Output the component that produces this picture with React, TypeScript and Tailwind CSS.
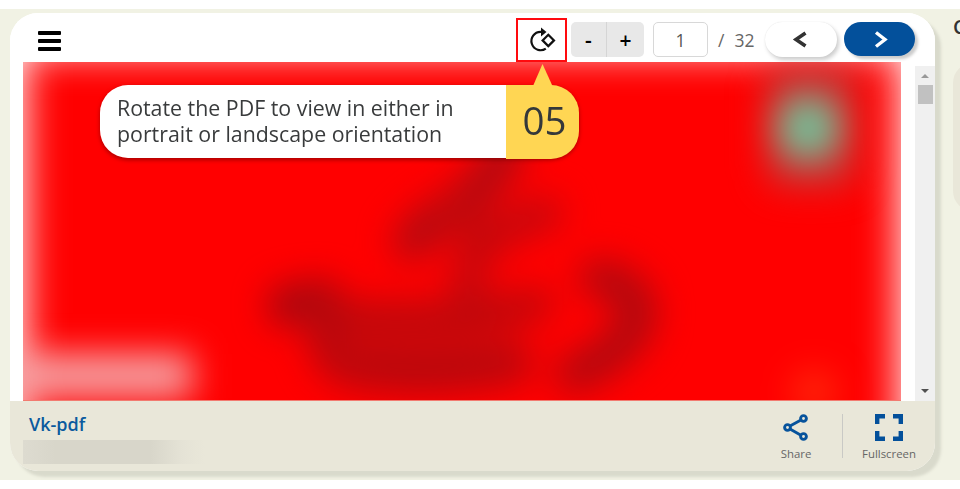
import React from "react";

function BlurredPage() {
  return (
    <svg className="block h-[339px] w-[878px]" viewBox="23 62 878 339" aria-hidden="true">
      <defs>
        <filter id="edge" filterUnits="userSpaceOnUse" x="-80" y="-30" width="1100" height="600" colorInterpolationFilters="sRGB">
          <feGaussianBlur stdDeviation="20" />
        </filter>
        <filter id="soft" filterUnits="userSpaceOnUse" x="-60" y="-20" width="1060" height="560" colorInterpolationFilters="sRGB">
          <feGaussianBlur stdDeviation="17" />
        </filter>
      </defs>
      <rect x="23" y="62" width="878" height="339" fill="#fff" />
      <rect x="24" y="51" width="876" height="460" fill="#f00" filter="url(#edge)" />
      <g filter="url(#soft)" fill="none" strokeLinecap="round" strokeLinejoin="round">
        <path d="M508 142Q498 174 466 200Q426 222 412 242" stroke="#b00b12" strokeWidth="38" />
        <path d="M546 213Q500 226 478 252Q464 270 469 302" stroke="#c4080e" strokeWidth="34" />
        <path d="M450 210L482 238" stroke="#c4080b" strokeWidth="32" />
        <path d="M288 306L322 300" stroke="#980812" strokeWidth="40" />
        <path d="M308 312Q420 326 538 304" stroke="#bd080c" strokeWidth="32" />
        <path d="M326 328Q326 362 350 368Q430 382 516 364" stroke="#b4080e" strokeWidth="36" />
        <path d="M350 344L510 342" stroke="#d40608" strokeWidth="24" />
        <path d="M598 278C654 288 656 338 574 374" stroke="#ae0910" strokeWidth="37" />
        <rect x="0" y="354" width="192" height="44" fill="#f6a2a4" />
        <rect x="765" y="64" width="92" height="124" rx="20" fill="#c03c3c" opacity=".8" />
        <circle cx="808" cy="128" r="33" fill="#78ba94" />
        <circle cx="814" cy="392" r="22" fill="#ff3a10" opacity=".7" />
      </g>
      <path d="M23 400.5H901" stroke="#f27b70" />
    </svg>
  );
}

function Toolbar() {
  return (
    <header className="flex h-[49px] shrink-0 items-start bg-white pl-[28px] pt-[9px] text-[#333]">
      <button className="mt-[9px] flex w-[23px] flex-col gap-[4px]" aria-label="Menu">
        <span className="h-[3.5px] w-[23px] rounded-[1px] bg-black" />
        <span className="mt-[0.5px] h-[3.5px] w-[23px] rounded-[1px] bg-black" />
        <span className="h-[4px] w-[23px] rounded-[1px] bg-black" />
      </button>
      <button className="-mt-[4px] ml-[455px] h-[44px] w-[51px] shrink-0 border-2 border-[#ff0a0e]" aria-label="Rotate">
        <svg width="47" height="40" viewBox="518 20 47 40" fill="none" stroke="#111" strokeWidth="2.2">
          <path d="M545.8 48.6A9.2 9.2 0 1 1 540.5 31.8H543" />
          <path d="M541 27.5L546.5 32L541 36.5Z" fill="#111" stroke="none" />
          <path d="M548.3 34.7L554 40.4L548.3 46.1L542.6 40.4Z" />
        </svg>
      </button>
      <div className="ml-[4px] flex h-[35px] w-[73px] shrink-0 overflow-hidden rounded-[5px] bg-[#e8e8e8] text-[21px] font-semibold text-black">
        <button className="w-[36px] border-r border-[#d5d5d5] leading-[37px]">-</button>
        <button className="w-[37px] leading-[37px]">+</button>
      </div>
      <div className="ml-[9px] h-[35px] w-[55px] shrink-0 rounded-[5px] border-[1.5px] border-[#d8d8d8] text-center text-[17.5px] leading-[34px] text-[#555]">1</div>
      <div className="ml-[10px] w-[47px] shrink-0 text-[17.5px] leading-[36px] text-[#666]">/<span className="ml-[10px]">32</span></div>
      <button className="flex h-[35px] w-[72px] shrink-0 items-center justify-center rounded-full bg-white pr-[3px] shadow-[2px_3px_4px_#ccc,0_0_1px_#ddd]" aria-label="Previous">
        <svg width="18" height="20" viewBox="0 0 18 20" fill="none" stroke="#333" strokeWidth="3.6"><path d="M14.5 3L5 9.5L14.5 16" /></svg>
      </button>
      <button className="ml-[7px] flex h-[34px] w-[71px] shrink-0 items-center justify-center rounded-full bg-[#03509b] pl-[3px] shadow-[3px_3px_3px_#ccc]" aria-label="Next">
        <svg width="18" height="20" viewBox="0 0 18 20" fill="none" stroke="#fff" strokeWidth="3.4"><path d="M4 3.5L13 10.5L4 17.5" /></svg>
      </button>
    </header>
  );
}

function Footer() {
  return (
    <footer className="flex h-[70px] shrink-0 bg-[#e9e7d9]">
      <div className="w-[748px] pl-[13px] pt-[10px]">
        <div className="pl-[6px] text-[18px] font-semibold leading-[26px] text-[#0b5a9e]">Vk-pdf</div>
        <div className="mt-[3px] h-[24px] w-[182px] bg-[linear-gradient(90deg,#dddbd0_0%,#d8d6ca_18%,#d8d6ca_70%,#e5e3d6_88%,#e9e7d9_100%)]" />
      </div>
      <div className="flex w-[84px] flex-col items-start pt-[12px] text-[11.4px] text-[#666]">
        <div className="flex w-[76px] flex-col items-center">
          <svg width="28" height="30" viewBox="0 0 28 30" fill="none" stroke="#07539c" strokeWidth="2.9">
            <path d="M8 13L18.5 7.2M8 16L18.5 22" />
            <circle cx="5.5" cy="14.5" r="2.9" /><circle cx="21.5" cy="5.5" r="2.9" /><circle cx="21.5" cy="23.5" r="2.9" />
          </svg>
          <span className="leading-[22px]">Share</span>
        </div>
      </div>
      <div className="mt-[13px] h-[44px] w-px bg-[#c9c9c5]" />
      <div className="flex w-[92px] flex-col items-center pt-[13px] text-[11.4px] text-[#666]">
        <svg width="28" height="27" viewBox="0 0 28 27" fill="none" stroke="#03509b" strokeWidth="4.4">
          <path d="M2.2 10V2.2H10M18 2.2H25.8V10M25.8 17V24.8H18M10 24.8H2.2V17" />
        </svg>
        <span className="leading-[26px]">Fullscreen</span>
      </div>
    </footer>
  );
}

function Callout() {
  return (
    <aside className="absolute left-[100px] top-[85px] flex h-[73px] w-[479px] rounded-[28px] shadow-[0_2px_4px_#6b000099]">
      <p className="w-[406px] rounded-l-[28px] bg-white pl-[17px] pt-[10px] text-[21.35px] leading-[26px] text-[#393b3c]">
        Rotate the PDF to view in either in<br />portrait or landscape orientation
      </p>
      <div className="h-[74px] w-[73px] rounded-r-[28px] bg-[#ffd653] pl-[4px] text-center text-[38.5px] leading-[71px] text-[#34383a]">05</div>
      <svg className="absolute left-[433px] top-[-21px]" width="20" height="22" viewBox="0 0 20 22" aria-hidden="true">
        <path d="M9.5 0L19.5 22H0Z" fill="#ffd653" />
      </svg>
    </aside>
  );
}

export default function App() {
  return (
    <div className="relative h-[489px] w-[960px] overflow-hidden bg-white py-[9px] font-['Open_Sans','Noto_Sans',sans-serif]">
      <main className="flex h-[471px] overflow-hidden bg-[#f1f2e4] pl-[10px] pt-[4px]">
        <section className="flex h-[458px] w-[925px] shrink-0 flex-col overflow-hidden rounded-[28px] bg-white shadow-[6px_6px_3px_#d9dacc]">
          <Toolbar />
          <div className="flex h-[339px] shrink-0 pl-[13px]">
            <BlurredPage />
            <div className="ml-[14px] mt-[4px] flex w-[20px] flex-col items-center bg-[#f0f0f0]">
              <svg className="mt-[8px]" width="8" height="4"><path d="M4 0L8 4H0Z" fill="#999" /></svg>
              <div className="mt-[7px] h-[19px] w-[15px] bg-[#c1c1c1]" />
              <svg className="mb-[8px] mt-auto" width="8" height="4"><path d="M0 0H8L4 4Z" fill="#505050" /></svg>
            </div>
          </div>
          <Footer />
        </section>
        <div className="ml-[18px] w-[90px] shrink-0">
          <div className="h-[50px] text-[20px] font-semibold leading-[27px] text-[#333]">C</div>
          <div className="h-[148px] rounded-[20px] bg-[#e9e7d9]" />
        </div>
      </main>
      <Callout />
    </div>
  );
}
